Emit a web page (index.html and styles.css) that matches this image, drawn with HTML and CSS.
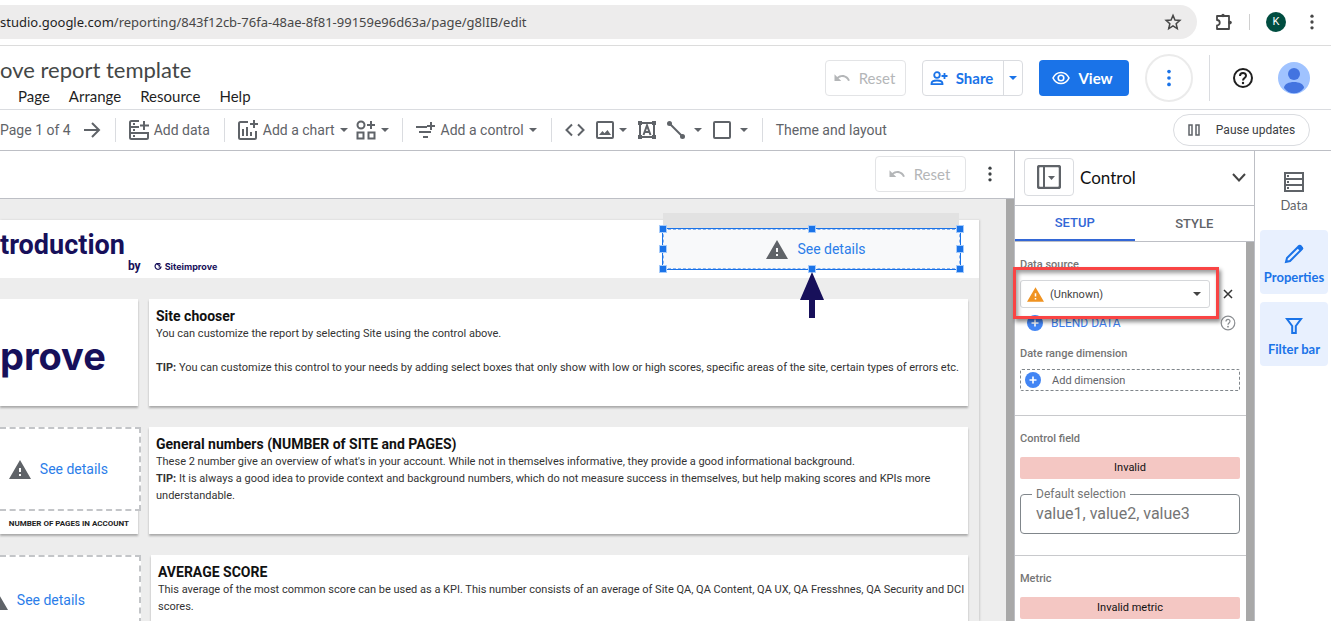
FILE: index.html
```html
<!DOCTYPE html>
<html lang="en">
<head>
    <meta charset="UTF-8">
    <meta name="viewport" content="width=device-width, initial-scale=1.0">
    <title>Siteimprove report template</title>
    <link rel="stylesheet" href="styles.css">
</head>
<body>
    <svg class="defs" aria-hidden="true">
        <symbol id="undo" viewBox="0 0 24 24"><path d="M12.500 8c-2.650 0-5.050 1-6.900 2.600L2 7v9h9l-3.620-3.620c1.390-1.160 3.160-1.880 5.120-1.880 3.540 0 6.550 2.310 7.600 5.500l2.370-.78C21.080 11.030 17.150 8 12.500 8z" fill="currentColor"/></symbol>
        <symbol id="caret" viewBox="0 0 8 4"><path d="M0 0h8L4 4z" fill="currentColor"/></symbol>
        <symbol id="dots" viewBox="0 0 24 24"><g fill="currentColor"><circle cx="12" cy="5" r="2"/><circle cx="12" cy="12" r="2"/><circle cx="12" cy="19" r="2"/></g></symbol>
        <symbol id="warn" viewBox="0 0 22 19"><path d="M11 0L0 19h22zM10 8h2v4h-2zm0 6h2v2h-2z" fill="currentColor" fill-rule="evenodd"/></symbol>
        <symbol id="plus" viewBox="0 0 16 16"><circle cx="8" cy="8" r="8" fill="#4285f4"/><path d="M8 4.500v7M4.500 8h7" stroke="#fff" stroke-width="1.600"/></symbol>
    </svg>

    <div class="browser-bar">
        <div class="address">
            <span class="url"><b>studio.google.com</b>/reporting/843f12cb-76fa-48ae-8f81-99159e96d63a/page/g8lIB/edit</span>
            <button class="plain" aria-label="Bookmark"><svg width="18" height="18" viewBox="0 0 24 24"><path d="M12 3.200l2.600 6.100 6.600.6-5 4.400 1.500 6.500-5.700-3.500-5.700 3.500 1.500-6.500-5-4.400 6.600-.6z" fill="none" stroke="#474747" stroke-width="2"/></svg></button>
        </div>
        <button class="plain" aria-label="Extensions"><svg width="18" height="18" viewBox="0 0 18 18"><path d="M2 3h12v13H2v-3.500a2.600 2.600 0 0 0 0-5.500z" fill="none" stroke="#474747" stroke-width="1.800" stroke-linejoin="round"/><circle cx="8" cy="2.500" r="1.700" fill="#474747"/><circle cx="15" cy="9.600" r="1.800" fill="#474747"/></svg></button>
        <span class="bar-sep"></span>
        <button class="profile">K</button>
        <button class="plain" aria-label="Browser menu"><svg width="20" height="20"><use href="#dots"/></svg></button>
    </div>

    <header>
        <div class="heading">
            <h1>ove report template</h1>
            <nav>
                <a href="#">Page</a>
                <a href="#">Arrange</a>
                <a href="#">Resource</a>
                <a href="#">Help</a>
            </nav>
        </div>
        <div class="actions">
            <button class="reset" disabled><svg width="18" height="18"><use href="#undo"/></svg>Reset</button>
            <div class="share">
                <button><svg width="18" height="16" viewBox="0 0 18 16"><g fill="none" stroke="#1a73e8" stroke-width="1.800"><circle cx="7" cy="5" r="2.800"/><path d="M1.500 13.500c0-4 11-4 11 0v.6h-11zM14.500 3v6M11.500 6h6"/></g></svg>Share</button>
                <button aria-label="Share options"><svg width="8" height="4"><use href="#caret"/></svg></button>
            </div>
            <button class="view"><svg width="18" height="14" viewBox="0 0 18 14"><path d="M1 7c3.500-7.400 12.500-7.400 16 0-3.500 7.400-12.500 7.400-16 0z" fill="none" stroke="#fff" stroke-width="1.600"/><circle cx="9" cy="7" r="2.800" fill="none" stroke="#fff" stroke-width="1.600"/></svg>View</button>
            <button class="more" aria-label="More options"><svg width="22" height="22"><use href="#dots"/></svg></button>
            <span class="header-sep"></span>
            <button class="plain" aria-label="Help"><svg width="22" height="22" viewBox="0 0 22 22"><g fill="none" stroke="#1f1f1f" stroke-width="2"><circle cx="11" cy="11" r="9"/><path d="M8 9c0-4 6-4 6-.3 0 2.300-3 2.300-3 4.800"/></g><circle cx="11" cy="16" r="1.200" fill="#1f1f1f"/></svg></button>
            <button class="plain" aria-label="Account"><svg width="32" height="32" viewBox="0 0 32 32"><circle cx="16" cy="16" r="16" fill="#a0c3ff"/><circle cx="16" cy="12" r="6" fill="#4374e0"/><path d="M6 26c0-8 20-8 20 0-5 7-15 7-20 0z" fill="#4374e0"/></svg></button>
        </div>
    </header>

    <div class="toolbar">
        <div class="tools pager">
            <span>Page 1 of 4</span>
            <button aria-label="Next page"><svg width="18" height="18" viewBox="0 0 18 18"><path d="M1 9h15M9 2l7 7-7 7" fill="none" stroke="currentColor" stroke-width="2"/></svg></button>
        </div>
        <div class="tools">
            <button><svg width="20" height="20" viewBox="0 0 20 20"><g fill="none" stroke="currentColor" stroke-width="2"><path d="M10 1H2.500Q1 1 1 2.500V17.500Q1 19 2.500 19h15q1.500 0 1.500-1.500V13H1M10 7H1M15 1v9M11 5.500h9"/><path d="M4 4h2M4 10h2M4 16h2"/></g></svg>Add data</button>
        </div>
        <div class="tools charts">
            <button><svg width="20" height="20" viewBox="0 0 20 20"><g fill="none" stroke="currentColor" stroke-width="2"><path d="M10 2H2.500Q1 2 1 3.500v14Q1 19 2.500 19h14q1.500 0 1.500-1.500V11M16 0v8M12 4h8M5 9v7M9 7v9M13 12v4"/></g></svg>Add a chart<svg width="8" height="4"><use href="#caret"/></svg></button>
            <button aria-label="Community visualizations"><svg width="20" height="20" viewBox="0 0 20 20"><g fill="none" stroke="currentColor" stroke-width="2"><circle cx="5" cy="5" r="3.500"/><path d="M15 1v8M11 5h8M1.500 12.500h6v6h-6zM12.500 12.500h6v6h-6z"/></g></svg><svg width="8" height="4"><use href="#caret"/></svg></button>
        </div>
        <div class="tools">
            <button><svg width="20" height="18" viewBox="0 0 20 18"><path d="M0 6h11M3 11h12M7 16h5M15 1v8M11 5h8" fill="none" stroke="currentColor" stroke-width="2"/></svg>Add a control<svg width="8" height="4"><use href="#caret"/></svg></button>
        </div>
        <div class="tools insert">
            <button aria-label="URL embed"><svg width="20" height="14" viewBox="0 0 20 14"><path d="M7 1.500L1.500 7 7 12.500M13 1.500L18.500 7 13 12.500" fill="none" stroke="currentColor" stroke-width="2"/></svg></button>
            <button aria-label="Image"><svg width="18" height="18" viewBox="0 0 18 18"><rect x="1" y="1" width="16" height="16" rx="1" fill="none" stroke="currentColor" stroke-width="2"/><path d="M3 14l3.500-4 2 2.300L11.500 9 15 14z" fill="currentColor"/></svg><svg width="8" height="4"><use href="#caret"/></svg></button>
            <button aria-label="Text"><svg width="18" height="18" viewBox="0 0 18 18"><g fill="none" stroke="currentColor" stroke-width="2"><rect x="2" y="2" width="14" height="14"/><path d="M5.500 14L9 4.500 12.500 14M6.500 11h5"/></g><path d="M0 0h4v4H0zM14 0h4v4h-4zM0 14h4v4H0zM14 14h4v4h-4z" fill="currentColor"/></svg></button>
            <button class="wide" aria-label="Line"><svg width="18" height="18" viewBox="0 0 18 18"><path d="M2.500 2.500l13 13" stroke="currentColor" stroke-width="2"/><circle cx="2.500" cy="2.500" r="2.500" fill="currentColor"/><circle cx="15.500" cy="15.500" r="2.500" fill="currentColor"/></svg><svg width="8" height="4"><use href="#caret"/></svg></button>
            <button class="wide" aria-label="Shape"><svg width="18" height="18" viewBox="0 0 18 18"><rect x="1" y="1" width="16" height="16" rx="1" fill="none" stroke="currentColor" stroke-width="2"/></svg><svg width="8" height="4"><use href="#caret"/></svg></button>
        </div>
        <div class="tools"><button>Theme and layout</button></div>
        <button class="pause"><svg width="12" height="12" viewBox="0 0 12 12"><path d="M1 1h3v10H1zM8 1h3v10H8z" fill="none" stroke="#5f6368" stroke-width="1.500"/></svg>Pause updates</button>
    </div>

    <main>
        <section class="editor">
            <div class="editor-bar">
                <button class="reset" disabled><svg width="18" height="18"><use href="#undo"/></svg>Reset</button>
                <button class="plain" aria-label="Report menu"><svg width="20" height="20"><use href="#dots"/></svg></button>
            </div>
            <div class="canvas">
                <div class="report">
                    <div class="banner">
                        <h2>troduction</h2>
                        <span class="by">by</span>
                        <span class="brand"><svg width="8" height="8" viewBox="0 0 8 8"><path d="M6.500 1.500A3 3 0 1 0 7 4H4.500M3 1l3 2" fill="none" stroke="#17105a" stroke-width="1.200"/></svg>Siteimprove</span>
                        <div class="control-shade"></div>
                        <div class="selected-control">
                            <a class="error" href="#"><svg width="22" height="19"><use href="#warn"/></svg>See details</a>
                            <i class="handle top left"></i><i class="handle top center"></i><i class="handle top right"></i>
                            <i class="handle middle left"></i><i class="handle middle right"></i>
                            <i class="handle bottom left"></i><i class="handle bottom center"></i><i class="handle bottom right"></i>
                            <svg class="pointer" width="24" height="46" viewBox="0 0 24 46"><path d="M12 0L24 28H15V46H9V28H0z" fill="#17105a"/></svg>
                        </div>
                    </div>
                    <div class="row">
                        <div class="tile logo">prove</div>
                        <article class="card">
                            <h3>Site chooser</h3>
                            <p>You can customize the report by selecting Site using the control above.</p>
                            <p class="spaced"><b>TIP:</b> You can customize this control to your needs by adding select boxes that only show with low or high scores, specific areas of the site, certain types of errors etc.</p>
                        </article>
                    </div>
                    <div class="row">
                        <div class="tile">
                            <div class="broken"><a class="error" href="#"><svg width="22" height="19"><use href="#warn"/></svg>See details</a></div>
                            <div class="caption">NUMBER OF PAGES IN ACCOUNT</div>
                        </div>
                        <article class="card">
                            <h3>General numbers (NUMBER of SITE and PAGES)</h3>
                            <p>These 2 number give an overview of what's in your account. While not in themselves informative, they provide a good informational background.</p>
                            <p><b>TIP:</b> It is always a good idea to provide context and background numbers, which do not measure success in themselves, but help making scores and KPIs more understandable.</p>
                        </article>
                    </div>
                    <div class="row last">
                        <div class="tile">
                            <div class="broken score"><a class="error" href="#"><svg width="22" height="19"><use href="#warn"/></svg>See details</a></div>
                        </div>
                        <article class="card">
                            <h3>AVERAGE SCORE</h3>
                            <p>This average of the most common score can be used as a KPI. This number consists of an average of Site QA, QA Content, QA UX, QA Fresshnes, QA Security and DCI scores.</p>
                        </article>
                    </div>
                </div>
            </div>
        </section>

        <aside class="panel">
            <div class="panel-head">
                <span class="type-icon"><svg width="24" height="24" viewBox="0 0 24 24"><rect x="1" y="1" width="22" height="22" rx="2" fill="none" stroke="#5f6368" stroke-width="2.500"/><path d="M7 2v20" stroke="#5f6368" stroke-width="2"/><path d="M11 11h7l-3.500 4z" fill="#5f6368"/></svg></span>
                <h2>Control</h2>
                <button class="plain" aria-label="Collapse"><svg width="14" height="9" viewBox="0 0 14 9"><path d="M1 1l6 6.500L13 1" fill="none" stroke="#444" stroke-width="2"/></svg></button>
            </div>
            <div class="tabs">
                <button class="active">SETUP</button>
                <button>STYLE</button>
            </div>
            <div class="panel-body">
                <section>
                    <label class="label" for="source">Data source</label>
                    <div class="source">
                        <div class="picker">
                            <svg width="17" height="15"><use href="#warn"/></svg>
                            <select id="source"><option>(Unknown)</option></select>
                            <svg class="arrow" width="8" height="4"><use href="#caret"/></svg>
                            <span class="highlight"></span>
                        </div>
                        <button class="plain" aria-label="Remove"><svg width="10" height="10" viewBox="0 0 10 10"><path d="M1 1l8 8M9 1L1 9" stroke="#333" stroke-width="1.500"/></svg></button>
                    </div>
                    <div class="blend">
                        <button><svg width="16" height="16"><use href="#plus"/></svg>BLEND DATA</button>
                        <button class="plain" aria-label="About blending"><svg width="16" height="16" viewBox="0 0 16 16"><g fill="none" stroke="#8a8d91" stroke-width="1.200"><circle cx="8" cy="8" r="6.800"/><path d="M6 6.500c0-2.800 4-2.800 4-.2C10 8 8 8 8 9.800"/></g><circle cx="8" cy="11.700" r=".9" fill="#8a8d91"/></svg></button>
                    </div>
                    <div class="label">Date range dimension</div>
                    <button class="add-dimension"><svg width="16" height="16"><use href="#plus"/></svg>Add dimension</button>
                </section>
                <section>
                    <div class="label">Control field</div>
                    <button class="invalid">Invalid</button>
                    <fieldset>
                        <legend><label for="selection">Default selection</label></legend>
                        <input id="selection" type="text" placeholder="value1, value2, value3">
                    </fieldset>
                </section>
                <section>
                    <div class="label">Metric</div>
                    <button class="invalid">Invalid metric</button>
                </section>
            </div>
        </aside>

        <div class="rail">
            <button><svg width="20" height="20" viewBox="0 0 20 20"><path d="M1 1h18v18H1zM1 7h18M1 13h18" fill="none" stroke="#5f6368" stroke-width="2"/><path d="M3 3h2v2H3zM3 9h2v2H3zM3 15h2v2H3z" fill="#5f6368"/></svg>Data</button>
            <button class="on"><svg width="20" height="20" viewBox="0 0 20 20"><path d="M2 18l1-4L14.500 2.500a1.500 1.500 0 0 1 2.500 0l.5.500a1.500 1.500 0 0 1 0 2.500L6 17z" fill="none" stroke="#1a73e8" stroke-width="2"/><path d="M13 4l3-3 3.500 3.500L16 7z" fill="#1a73e8"/></svg>Properties</button>
            <button class="on"><svg width="20" height="20" viewBox="0 0 20 20"><path d="M3 3h14l-5.200 7v7H8.200v-7z" fill="none" stroke="#1a73e8" stroke-width="2"/></svg>Filter bar</button>
        </div>
    </main>
</body>
</html>
```

FILE: styles.css
```css
* {
    box-sizing: border-box;
}

body {
    display: flex;
    flex-direction: column;
    height: 100vh;
    margin: 0;
    overflow: hidden;
    font-family: Roboto, sans-serif;
    font-size: 14px;
    color: #5f6368;
    background: #fff;
}

h1, h2, h3, p {
    margin: 0;
}

svg {
    flex: none;
}

a {
    text-decoration: none;
}

button {
    display: flex;
    align-items: center;
    justify-content: center;
    padding: 0;
    border: none;
    background: none;
    font: inherit;
    color: inherit;
    white-space: nowrap;
    cursor: pointer;
}

.defs {
    position: absolute;
    width: 0;
    height: 0;
}

/* browser bar */
.browser-bar {
    display: flex;
    flex: none;
    align-items: center;
    height: 46px;
    padding: 0 9px 2px 0;
    border-bottom: 1px solid #dcdcdc;
}

.browser-bar > .plain {
    color: #474747;
}

.address {
    display: flex;
    flex: 1;
    align-items: center;
    justify-content: space-between;
    height: 34px;
    margin-right: 18px;
    padding-right: 15px;
    border-radius: 0 17px 17px 0;
    background: #edecec;
}

.url {
    font-family: "Noto Sans", sans-serif;
    font-size: 13px;
    color: #474747;
}

.url b {
    font-weight: normal;
    color: #1f1f1f;
}

.bar-sep {
    width: 1px;
    height: 16px;
    margin: 0 16px;
    background: #d0d0d0;
}

.profile {
    width: 20px;
    height: 20px;
    margin-right: 16px;
    border-radius: 50%;
    background: #004d40;
    font-size: 11px;
    color: #fff;
}

/* report header */
header {
    display: flex;
    flex: none;
    align-items: center;
    justify-content: space-between;
    height: 64px;
    padding-right: 21px;
    border-bottom: 1px solid #dadce0;
}

.heading {
    padding-top: 8px;
}

h1 {
    font-family: Lato, sans-serif;
    font-size: 22px;
    font-weight: normal;
    line-height: 28px;
    color: #444746;
}

nav {
    display: flex;
    gap: 19px;
    padding-left: 18px;
}

nav a {
    font-family: Lato, sans-serif;
    font-size: 15px;
    line-height: 24px;
    color: #1f1f1f;
}

.actions {
    display: flex;
    align-items: center;
    font-family: Lato, sans-serif;
    font-size: 15px;
}

.reset {
    gap: 8px;
    height: 36px;
    width: 81px;
    padding-right: 3px;
    border: 1px solid #e3e4e6;
    border-radius: 4px;
    font-family: Lato, sans-serif;
    font-size: 15px;
    color: #b4b6b8;
}

.share {
    display: flex;
    height: 36px;
    margin: 0 16px;
    border: 1px solid #dadce0;
    border-radius: 4px;
    font-weight: bold;
    color: #1a73e8;
}

.share button {
    gap: 8px;
    width: 80px;
    padding-right: 3px;
}

.share button + button {
    width: 19px;
    padding: 0;
    border-left: 1px solid #dadce0;
}

.view {
    gap: 8px;
    width: 90px;
    height: 36px;
    padding-right: 3px;
    border-radius: 4px;
    background: #1a73e8;
    font-weight: bold;
    color: #fff;
}

.more {
    width: 48px;
    height: 48px;
    margin: 0 16px;
    border: 2px solid #ebebeb;
    border-radius: 50%;
    color: #1a73e8;
}

.header-sep {
    width: 1px;
    height: 46px;
    margin-right: 22px;
    background: #dadce0;
}

.header-sep + .plain {
    margin-right: 24px;
}

/* toolbar */
.toolbar {
    display: flex;
    flex: none;
    align-items: center;
    height: 41px;
    padding: 0 21px 1px 0;
    border-bottom: 1px solid #bdbfc5;
}

.tools {
    display: flex;
    align-items: center;
    gap: 12px;
    height: 24px;
    padding: 0 14px 0 13px;
}

.tools + .tools {
    border-left: 1px solid #dadce0;
}

.tools button {
    gap: 5px;
}

.tools.pager {
    padding-left: 0;
}

.tools.charts {
    gap: 8px;
    padding-right: 13px;
}

.tools.insert {
    gap: 11px;
}

.insert .wide {
    gap: 9px;
}

.pause {
    gap: 16px;
    width: 137px;
    height: 32px;
    margin-left: auto;
    border: 1px solid #dadce0;
    border-radius: 16px;
    font-size: 12px;
    color: #3c4043;
}

/* editor */
main {
    display: flex;
    flex: 1;
    min-height: 0;
    overflow: hidden;
}

.editor {
    display: flex;
    flex: 1;
    flex-direction: column;
    min-width: 0;
}

.editor-bar {
    display: flex;
    flex: none;
    align-items: center;
    justify-content: flex-end;
    gap: 14px;
    height: 48px;
    padding: 0 14px 2px 0;
    border-bottom: 1px solid #bdbfc5;
    color: #3c4043;
}

.editor-bar .reset {
    width: 91px;
}

.canvas {
    flex: 1;
    min-height: 0;
    padding: 21px 27px 0 0;
    overflow: hidden;
    border-right: 8px solid #a8a8a8;
    background: #ededed;
}

.report {
    height: 100%;
    box-shadow: 1px 0 2px #ccc;
}

.banner {
    position: relative;
    display: flex;
    height: 58px;
    background: #fff;
    color: #17105a;
}

.banner h2 {
    font-size: 27px;
    line-height: 50px;
}

.by {
    align-self: flex-end;
    margin: 0 13px 5px 3px;
    font-size: 12px;
    font-weight: bold;
}

.brand {
    display: flex;
    align-items: center;
    align-self: flex-end;
    gap: 3px;
    margin-bottom: 6px;
    font-family: Inter, sans-serif;
    font-size: 9px;
    font-weight: bold;
}

.control-shade {
    position: absolute;
    top: -7px;
    right: 20px;
    width: 296px;
    height: 15px;
    background: #e2e2e2;
}

.selected-control {
    position: absolute;
    top: 9px;
    right: 19px;
    display: flex;
    align-items: center;
    justify-content: center;
    width: 297px;
    height: 40px;
    padding-left: 9px;
    border: 1px dashed #8ab4f0;
    outline: 1px solid #1a73e8;
    background: #f8f9fa;
}

.error {
    display: flex;
    align-items: center;
    gap: 9px;
    white-space: nowrap;
    color: #2b7de9;
}

.error svg {
    color: #5f6368;
}

.handle {
    position: absolute;
    width: 8px;
    height: 8px;
    border: 1px solid #a6cbfb;
    background: #1a73e8;
}

.top { top: -5px; }
.middle { top: 15px; }
.bottom { bottom: -5px; }
.left { left: -5px; }
.center { left: 144px; }
.right { right: -5px; }

.pointer {
    position: absolute;
    top: 42px;
    left: 136px;
}

.row {
    display: flex;
    gap: 11px;
    height: 107px;
    margin: 21px 11px 21px 0;
}

.row.last {
    gap: 13px;
}

.tile {
    flex: none;
    width: 138px;
    background: #fff;
    box-shadow: 0 2px 2px #aaa;
}

.logo {
    padding-top: 34px;
    font-family: Inter, sans-serif;
    font-size: 38px;
    font-weight: bold;
    line-height: 46px;
    color: #17105a;
}

.broken {
    display: flex;
    align-items: center;
    justify-content: flex-end;
    width: 141px;
    height: 84px;
    padding-right: 31px;
    border: 2px dashed #c3c5c8;
    border-left: none;
    background: #fff;
}

.broken.score {
    height: 90px;
    padding-right: 54px;
}

.caption {
    padding-right: 9px;
    font-size: 8px;
    font-weight: bold;
    line-height: 26px;
    text-align: right;
    color: #222;
}

.card {
    flex: 1;
    padding: 8px 0 0 7px;
    background: #fff;
    box-shadow: 0 2px 2px #aaa;
    font-size: 11px;
    line-height: 17px;
    color: #333;
}

.card h3 {
    font-size: 14px;
    line-height: 18px;
    color: #111;
}

.spaced {
    margin-top: 17px;
}

/* properties panel */
.panel {
    display: flex;
    flex: none;
    flex-direction: column;
    width: 241px;
    border: 1px solid #bdbfc5;
    border-width: 0 1px;
    background: #fff;
}

.panel-head {
    display: flex;
    flex: none;
    align-items: center;
    height: 55px;
    padding: 0 8px 2px 9px;
    border-bottom: 1px solid #bdbfc5;
}

.type-icon {
    display: flex;
    align-items: center;
    justify-content: center;
    width: 50px;
    height: 38px;
    border: 1px solid #dadce0;
    border-radius: 4px;
}

.panel-head h2 {
    flex: 1;
    padding-left: 6px;
    font-family: Lato, sans-serif;
    font-size: 17px;
    font-weight: normal;
    color: #111;
}

.tabs {
    display: flex;
    flex: none;
    height: 36px;
    border-bottom: 1px solid #bdbfc5;
}

.tabs button {
    flex: 1;
    font-size: 13px;
    font-weight: 500;
}

.tabs .active {
    border-bottom: 2px solid #3367d6;
    color: #3367d6;
}

.panel-body {
    flex: 1;
    min-height: 0;
    border-right: 8px solid #a8a8a8;
}

.panel-body section {
    padding: 15px 6px 24px 5px;
}

.panel-body section + section {
    padding-bottom: 21px;
    border-top: 1px solid #c8c9cc;
}

.label {
    display: block;
    font-size: 11px;
    font-weight: 500;
    line-height: 16px;
    color: #757575;
}

.source {
    display: flex;
    align-items: center;
    gap: 13px;
    margin-top: 7px;
}

.picker {
    position: relative;
    display: flex;
    align-items: center;
    gap: 6px;
    width: 190px;
    height: 28px;
    padding: 0 8px 0 6px;
    border: 1px solid #d5d7da;
    border-radius: 3px;
    color: #f09321;
}

.picker select {
    flex: 1;
    padding: 0;
    border: none;
    background: none;
    font: 11px Roboto, sans-serif;
    color: #444;
    appearance: none;
}

.picker .arrow {
    color: #444;
}

/* callout frame around the data source picker */
.highlight {
    position: absolute;
    inset: -14px -10px -12px -8px;
    border: 3px solid #f94444;
    box-shadow: 2px 3px 4px rgba(0, 0, 0, 0.45), inset 2px 3px 4px rgba(0, 0, 0, 0.4);
    pointer-events: none;
}

.blend {
    display: flex;
    justify-content: space-between;
    margin: 7px 4px 15px 7px;
    font-size: 12px;
    color: #3b7ded;
}

.blend button {
    gap: 8px;
}

.add-dimension {
    justify-content: flex-start;
    gap: 11px;
    width: 100%;
    height: 22px;
    margin-top: 7px;
    padding-left: 4px;
    border: 1px dashed #80868b;
    border-radius: 2px;
    font-size: 11px;
}

.invalid {
    width: 100%;
    height: 22px;
    margin-top: 10px;
    padding-bottom: 2px;
    border-radius: 2px;
    background: #f4c7c3;
    font-size: 11px;
    color: #111;
}

fieldset {
    margin: 8px 0 0;
    padding: 0 15px 8px 11px;
    border: 1px solid #80868b;
    border-radius: 4px;
}

legend {
    padding: 0 4px;
    font-size: 12px;
    line-height: 14px;
    color: #757575;
}

fieldset input {
    width: 100%;
    height: 24px;
    padding: 0 4px;
    border: none;
    outline: none;
    font: 16px Roboto, sans-serif;
}

fieldset input::placeholder {
    color: #757575;
}

/* side rail */
.rail {
    display: flex;
    flex: none;
    flex-direction: column;
    gap: 8px;
    width: 76px;
    padding: 7px 3px 0 5px;
    font-family: Lato, sans-serif;
    font-size: 13px;
}

.rail button {
    flex-direction: column;
    gap: 5px;
    height: 64px;
    padding-top: 4px;
    border-radius: 4px;
}

.rail .on {
    background: #e8f0fe;
    font-weight: bold;
    color: #1a73e8;
}
```
